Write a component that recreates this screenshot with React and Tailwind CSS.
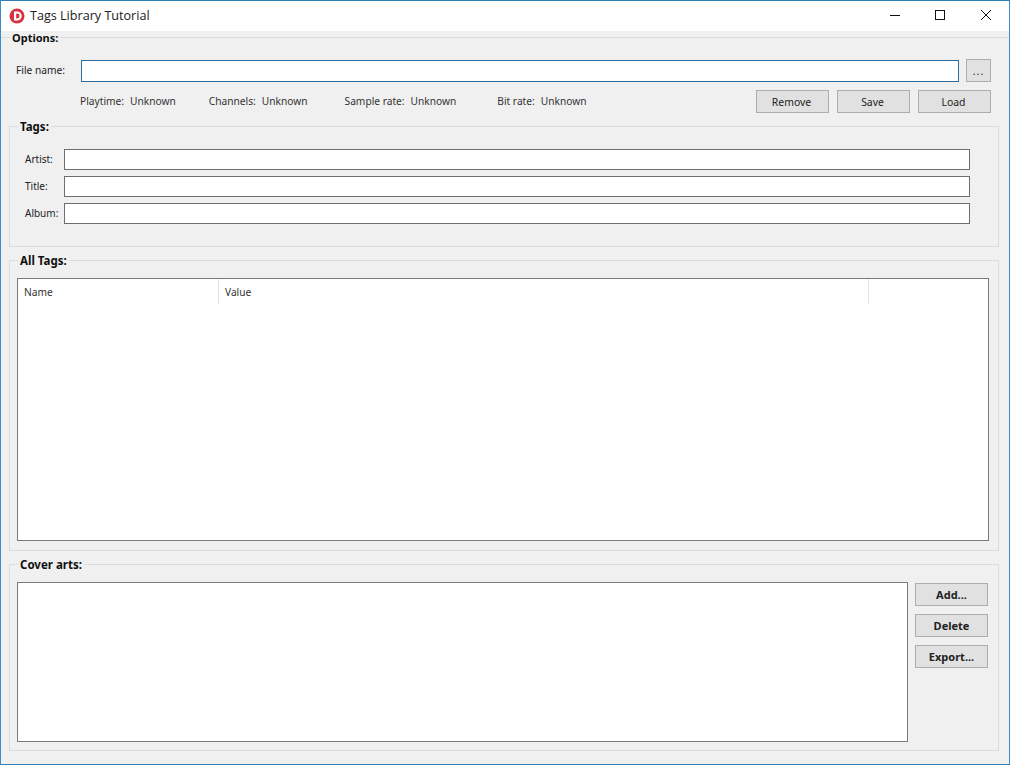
import React from "react";

const Group = ({ title, className, children }) => {
  return (
    <div className={"relative ml-[8px] mr-[10px] border border-[#dcdcdc] " + className}>
      <span className="absolute -top-[7px] left-[8px] bg-[#f0f0f0] px-[2px] text-[11.5px] leading-[14px] font-bold text-[#111]">
        {title}
      </span>
      {children}
    </div>
  );
};

const Button = ({ label, className, bold }) => {
  return (
    <button
      className={
        "h-[23px] border border-[#adadad] bg-[#e1e1e1] pt-[2px] text-[#222] " +
        (bold ? "text-[11px] font-bold " : "text-[10.4px] ") +
        className
      }
    >
      {label}
    </button>
  );
};

const TagRow = ({ label }) => {
  return (
    <div className="flex h-[21px] items-center">
      <span className="w-[39px] text-[10px] text-[#222]">{label}</span>
      <input type="text" className="h-[21px] w-[906px] border border-[#6e6e6e] bg-white" />
    </div>
  );
};

const Info = ({ label, value, className }) => {
  return (
    <span className={"text-[10.2px] text-[#333] " + className}>
      {label}
      <span className="ml-[6px]">{value}</span>
    </span>
  );
};

const App = () => {
  return (
    <div className="flex h-[765px] w-[1010px] flex-col border border-[#2f7fb5] border-x-[#3b8ccb] bg-[#f0f0f0] font-['Noto_Sans',sans-serif]">
      {/* title bar */}
      <div className="flex h-[30px] items-center bg-white">
        <svg width="16" height="16" viewBox="0 0 16 16" className="ml-[8px]">
          <circle cx="8" cy="8" r="7.5" fill="#d8343f" />
          <path d="M5 3.5h3.2a4.5 4.5 0 0 1 0 9H5z" fill="#fff" />
          <path d="M7.2 5.6h1a2.4 2.4 0 0 1 0 4.8h-1z" fill="#d8343f" />
        </svg>
        <span className="ml-[5px] font-['Open_Sans',sans-serif] text-[12.6px] text-[#222]">Tags Library Tutorial</span>
        <div className="ml-auto flex h-full items-center">
          <svg width="46" height="30" viewBox="0 0 46 30">
            <path d="M19 14.5h10" stroke="#111" strokeWidth="1" />
          </svg>
          <svg width="46" height="30" viewBox="0 0 46 30">
            <rect x="18.5" y="9.5" width="9" height="9" fill="none" stroke="#111" strokeWidth="1" />
          </svg>
          <svg width="46" height="30" viewBox="0 0 46 30">
            <path d="M18 9l10 10M28 9l-10 10" stroke="#111" strokeWidth="1" />
          </svg>
        </div>
      </div>

      {/* options */}
      <div className="relative mt-[6px] h-[89px] border-t border-[#dcdcdc]">
        <span className="absolute -top-[7px] left-[9px] bg-[#f0f0f0] px-[2px] text-[11px] leading-[14px] font-bold text-[#111]">
          Options:
        </span>
        <div className="flex items-start pt-[21px]">
          <span className="ml-[15px] mt-[4px] w-[65px] text-[10.2px] text-[#222]">File name:</span>
          <input type="text" className="mt-[1px] h-[22px] w-[878px] border border-[#2b6c9e] bg-white" />
          <Button label="..." className="ml-[7px] w-[25px] tracking-[1px]" />
        </div>
        <div className="mt-[8px] flex items-center">
          <Info label="Playtime:" value="Unknown" className="ml-[79px]" />
          <Info label="Channels:" value="Unknown" className="ml-[33px]" />
          <Info label="Sample rate:" value="Unknown" className="ml-[37px]" />
          <Info label="Bit rate:" value="Unknown" className="ml-[41px]" />
          <div className="ml-auto mr-[18px] flex gap-[8px]">
            <Button label="Remove" className="w-[73px] pr-[2px]" />
            <Button label="Save" className="w-[73px] pr-[2px]" />
            <Button label="Load" className="w-[73px] pr-[2px]" />
          </div>
        </div>
      </div>

      {/* tags */}
      <Group title="Tags:" className="h-[121px] flex-none">
        <div className="flex flex-col gap-[6px] pl-[15px] pt-[22px]">
          <TagRow label="Artist:" />
          <TagRow label="Title:" />
          <TagRow label="Album:" />
        </div>
      </Group>

      {/* all tags */}
      <Group title="All Tags:" className="mt-[13px] h-[291px] flex-none">
        <div className="ml-[7px] mt-[17px] h-[263px] w-[972px] border border-[#7a7a7a] bg-white">
          <div className="flex h-[25px] items-center text-[10.2px] text-[#333]">
            <span className="h-full w-[201px] border-r border-[#e5e5e5] pl-[6px] pt-[1px] leading-[25px]">Name</span>
            <span className="h-full w-[650px] border-r border-[#e5e5e5] pl-[6px] pt-[1px] leading-[25px]">Value</span>
          </div>
        </div>
      </Group>

      {/* cover arts */}
      <Group title="Cover arts:" className="mt-[13px] h-[187px] flex-none">
        <div className="flex pl-[7px] pt-[17px]">
          <div className="h-[160px] w-[891px] border border-[#7a7a7a] bg-white" />
          <div className="ml-[7px] mt-[1px] flex flex-col gap-[8px]">
            <Button label="Add..." className="w-[73px]" bold />
            <Button label="Delete" className="w-[73px]" bold />
            <Button label="Export..." className="w-[73px]" bold />
          </div>
        </div>
      </Group>
    </div>
  );
};

export default App;
